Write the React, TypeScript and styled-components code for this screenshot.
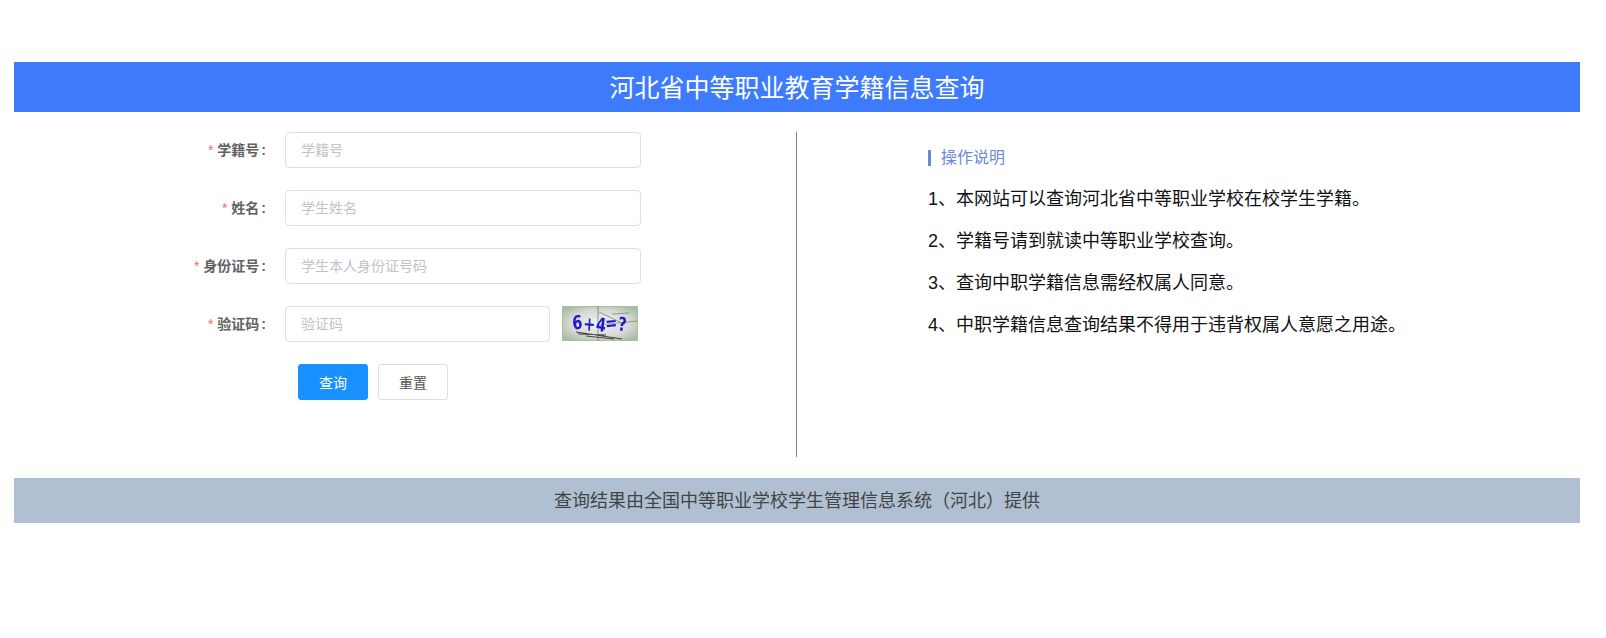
import React from "react";
import styled, { createGlobalStyle } from "styled-components";

const fontStack = `"Liberation Sans", "Noto Sans CJK SC", sans-serif`;

const GlobalStyle = createGlobalStyle`
  html, body {
    margin: 0;
    padding: 0;
    background: #fff;
    font-family: ${fontStack};
  }
  input::placeholder {
    color: #bfc3ca;
    opacity: 1;
  }
`;

const Page = styled.div`
  padding: 62px 26px 0 14px;
`;

const Banner = styled.h1`
  margin: 0;
  height: 50px;
  background: #3e7bfc;
  color: #fff;
  font-size: 25px;
  font-weight: 400;
  line-height: 52px;
  text-align: center;
`;

const Main = styled.div`
  display: flex;
  padding: 20px 0 21px;
`;

const FormSide = styled.form`
  width: 782px;
  height: 325px;
  border-right: 1px solid #808080;
  display: flex;
  flex-direction: column;
  gap: 22px;
`;

const Row = styled.div`
  display: flex;
  align-items: flex-start;
  height: 36px;
`;

const Label = styled.label`
  width: 252px;
  margin-right: 19px;
  line-height: 36px;
  text-align: right;
  font-size: 14px;
  font-weight: 700;
  color: #606266;
  white-space: nowrap;
`;

const Star = styled.span`
  color: #f56c6c;
  font-weight: 400;
  margin-right: 4px;
`;

const Colon = styled.span`
  margin-left: 2px;
`;

const Input = styled.input<{ $w: number }>`
  box-sizing: border-box;
  width: ${(p) => p.$w}px;
  height: 36px;
  border: 1px solid #dcdfe6;
  border-radius: 4px;
  padding: 0 15px;
  font-size: 14px;
  font-family: ${fontStack};
  outline: none;
  background: #fff;
`;

const Captcha = styled.svg`
  display: block;
  margin-left: 12px;
  width: 76px;
  height: 35px;
`;

const Buttons = styled.div`
  display: flex;
  gap: 10px;
  padding-left: 284px;
`;

const Btn = styled.button<{ $primary?: boolean }>`
  box-sizing: border-box;
  width: 70px;
  height: 36px;
  border-radius: 3px;
  border: 1px solid ${(p) => (p.$primary ? "#1890ff" : "#dcdfe6")};
  background: ${(p) => (p.$primary ? "#1890ff" : "#fff")};
  color: ${(p) => (p.$primary ? "#fff" : "#555")};
  font-size: 14px;
  font-family: ${fontStack};
  padding: 0;
`;

const Notes = styled.div`
  padding: 18px 0 0 131px;
`;

const NotesTitle = styled.div`
  border-left: 3px solid #6d88d6;
  padding-left: 10px;
  height: 16px;
  line-height: 16px;
  font-size: 16px;
  color: #6d88d6;
  margin-bottom: 21px;
`;

const NoteList = styled.div`
  display: flex;
  flex-direction: column;
  gap: 18px;
`;

const Note = styled.div`
  font-size: 18px;
  line-height: 24px;
  color: #111;
  white-space: nowrap;
`;

const Footer = styled.div`
  height: 45px;
  background: #b0bfd2;
  color: #444;
  font-size: 18px;
  line-height: 46px;
  text-align: center;
`;

const fields = [
  { label: "学籍号", placeholder: "学籍号" },
  { label: "姓名", placeholder: "学生姓名" },
  { label: "身份证号", placeholder: "学生本人身份证号码" },
];

const notes = [
  "1、本网站可以查询河北省中等职业学校在校学生学籍。",
  "2、学籍号请到就读中等职业学校查询。",
  "3、查询中职学籍信息需经权属人同意。",
  "4、中职学籍信息查询结果不得用于违背权属人意愿之用途。",
];

const CaptchaImage = () => (
  <Captcha viewBox="0 0 76 35">
    <defs>
      <filter id="soft">
        <feGaussianBlur stdDeviation="0.55" />
      </filter>
      <radialGradient id="shade" cx="50%" cy="50%" r="62%">
        <stop offset="0%" stopColor="#f4f4f3" />
        <stop offset="65%" stopColor="#d6d8d5" />
        <stop offset="100%" stopColor="#a9bca3" />
      </radialGradient>
    </defs>
    <rect x="0.5" y="0.5" width="75" height="34" fill="url(#shade)" stroke="#a5c39d" />
    <path d="M36 0V35" stroke="#555" strokeWidth="0.6" />
    <g filter="url(#soft)">
      <path d="M37 6L60 17M36 19L75 15M50 8L67 7" stroke="#777" strokeWidth="0.7" fill="none" />
      <path d="M14 26L60 33M16 28L44 29M24 30L52 33" stroke="#444" strokeWidth="1.1" fill="none" />
      <text
        x="11"
        y="24"
        fontFamily="'DejaVu Sans', sans-serif"
        fontSize="19"
        fontWeight="700"
        fill="#1c1cc8"
        rotate="-8 4 10 -4 8"
        textLength="53"
        lengthAdjust="spacingAndGlyphs"
      >
        6+4=?
      </text>
    </g>
  </Captcha>
);

export default function App() {
  return (
    <Page>
      <GlobalStyle />
      <Banner>河北省中等职业教育学籍信息查询</Banner>
      <Main>
        <FormSide onSubmit={(e) => e.preventDefault()}>
          {fields.map((f) => (
            <Row key={f.label}>
              <Label>
                <Star>*</Star>
                {f.label}
                <Colon>:</Colon>
              </Label>
              <Input $w={356} placeholder={f.placeholder} />
            </Row>
          ))}
          <Row>
            <Label>
              <Star>*</Star>
              验证码
              <Colon>:</Colon>
            </Label>
            <Input $w={265} placeholder="验证码" />
            <CaptchaImage />
          </Row>
          <Buttons>
            <Btn $primary type="submit">查询</Btn>
            <Btn type="reset">重置</Btn>
          </Buttons>
        </FormSide>
        <Notes>
          <NotesTitle>操作说明</NotesTitle>
          <NoteList>
            {notes.map((n) => (
              <Note key={n}>{n}</Note>
            ))}
          </NoteList>
        </Notes>
      </Main>
      <Footer>查询结果由全国中等职业学校学生管理信息系统（河北）提供</Footer>
    </Page>
  );
}
